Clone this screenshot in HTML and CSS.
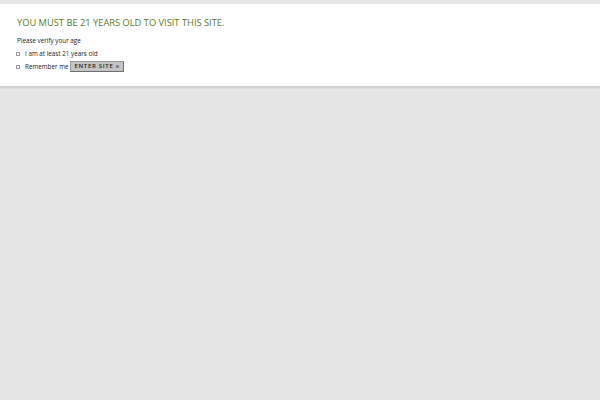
FILE: index.html
```html
<!DOCTYPE html>
<html>
<head>
<meta charset="utf-8">
<link rel="stylesheet" href="styles.css">
</head>
<body>
<div class="top"></div>
<div class="panel">
  <h1 class="title">YOU MUST BE 21 YEARS OLD TO VISIT THIS SITE.</h1>
  <p class="lead">Please verify your age</p>
  <div class="row r1"><span class="box"></span><span class="label">I am at least 21 years old</span></div>
  <div class="row r2"><span class="box"></span><span class="label">Remember me</span><button class="enter">ENTER SITE &raquo;</button></div>
</div>
</body>
</html>
```
FILE: styles.css
```css
html, body { margin: 0; padding: 0; }
body { background: #e5e5e5; font-family: "Open Sans", sans-serif; width: 600px; height: 400px; overflow: hidden; }
.top { height: 4px; background: #e6e6e6; }
.panel { background: #fff; height: 83px; padding: 12px 16px 0; box-sizing: border-box; border-bottom: 1px solid #d0d0d0; box-shadow: 0 1px 2px rgba(0,0,0,0.10); }
.title { margin: 0 0 0 1px; font-size: 9.3px; font-weight: 400; color: #5b7a2b; line-height: 13px; height: 13px; }
.lead { margin: 8px 0 0 1px; font-size: 6.3px; line-height: 8px; height: 8px; color: #222; }
.row { display: flex; align-items: center; }
.r1 { height: 10px; margin-top: 3.5px; }
.r2 { height: 12px; margin-top: 2px; }
.box { width: 2px; height: 2px; border: 1px solid #999; margin-right: 5px; background: #fff; border-radius: 0.5px; }
.label { font-size: 6.3px; color: #222; line-height: 8px; }
.enter { margin-left: 1.5px; font-family: "Open Sans", sans-serif; font-size: 6px; font-weight: 600; letter-spacing: 0.7px; background: #c4c4c4; border: 1px solid #9a9a9a; border-right-color: #6e6e6e; border-bottom-color: #6e6e6e; padding: 0 3px; height: 11px; width: 54px; line-height: 9px; color: #222; box-sizing: border-box; }
```
